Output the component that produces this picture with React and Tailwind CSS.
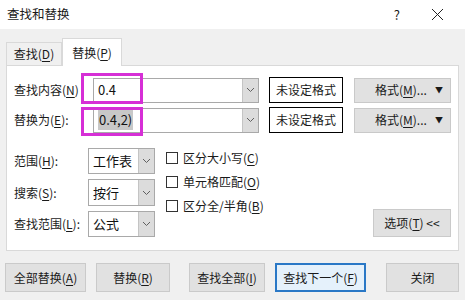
import React from "react";

const font = { fontFamily: '"Noto Sans CJK SC", "Noto Sans", sans-serif' };

function Key({ children }) {
  return <span className="underline underline-offset-2">{children}</span>;
}

function Chevron() {
  return (
    <svg width="9" height="6" viewBox="0 0 9 6" className="text-[#606060]">
      <polyline points="1,1 4.5,4.5 8,1" fill="none" stroke="currentColor" strokeWidth="1" />
    </svg>
  );
}

function Combo({ width, children }) {
  return (
    <div className={`flex h-[25px] border border-[#a9a9a9] bg-white ${width}`}>
      <div className="flex-1 flex items-center pl-[4px] text-[13px] text-[#111] whitespace-nowrap">{children}</div>
      <div className="w-[16px] bg-[#dcdcdc] border-l border-[#c4c4c4] flex items-center justify-center">
        <Chevron />
      </div>
    </div>
  );
}

function FormatButtons() {
  return (
    <div className="flex items-center">
      <div className="ml-[10px] w-[74px] h-[26px] border border-black flex items-center justify-center text-[12px] whitespace-nowrap">
        未设定格式
      </div>
      <div className="ml-[11px] w-[97px] h-[25px] bg-[#e1e1e1] border border-[#c9c9c9] flex items-center pl-[20px] text-[12px] whitespace-nowrap">
        <span>
          格式(<Key>M</Key>)...
        </span>
        <span className="ml-[8px] text-[8px]">▼</span>
      </div>
    </div>
  );
}

function Check({ children }) {
  return (
    <div className="flex items-center h-[24px] whitespace-nowrap">
      <div className="w-[12px] h-[12px] border border-[#333] bg-white" />
      <span className="ml-[5px] text-[12px]">{children}</span>
    </div>
  );
}

function Btn({ w, ml, blue, children }) {
  return (
    <div
      className={`h-[29px] flex items-center justify-center text-[12px] whitespace-nowrap ${w} ${ml} ${
        blue ? "bg-[#e5f1fb] border-2 border-[#2a78c6]" : "bg-[#e1e1e1] border border-[#cacaca]"
      }`}
    >
      {children}
    </div>
  );
}

export default function App() {
  return (
    <div className="w-[465px] h-[300px] bg-[#f0f0f0] text-[#1a1a1a] overflow-hidden" style={font}>
      {/* title bar */}
      <div className="h-[29px] bg-white flex items-center">
        <span className="ml-[7px] text-[12.5px]">查找和替换</span>
        <span className="ml-auto text-[13px] mr-[31px]">?</span>
        <svg width="13" height="13" viewBox="0 0 13 13" className="mr-[21px]">
          <path d="M1 1L12 12M12 1L1 12" stroke="#222" strokeWidth="1" />
        </svg>
      </div>

      {/* tabs */}
      <div className="h-[36px] flex items-end pl-[6px]">
        <div className="w-[56px] h-[23px] border border-b-0 border-[#d9d9d9] flex items-center justify-center text-[12px]">
          查找(<Key>D</Key>)
        </div>
        <div className="w-[60px] h-[28px] -mb-px bg-white border border-b-0 border-[#d9d9d9] flex items-center justify-center text-[12px] relative z-10">
          替换(<Key>P</Key>)
        </div>
      </div>

      {/* panel */}
      <div className="relative ml-[6px] w-[453px] h-[186px] bg-white border border-[#d9d9d9] pl-[7px] pt-[11px]">
        {/* row 1 */}
        <div className="flex items-center h-[26px]">
          <div className="w-[79px] text-[12px] whitespace-nowrap">
            查找内容(<Key>N</Key>)
          </div>
          <Combo width="w-[166px]">0.4</Combo>
          <FormatButtons />
        </div>
        {/* row 2 */}
        <div className="flex items-center h-[26px] mt-[4px]">
          <div className="w-[79px] text-[12px] whitespace-nowrap">
            替换为(<Key>E</Key>):
          </div>
          <Combo width="w-[166px]">
            <span className="bg-[#c8c8c8] px-px">0.4,2)</span>
          </Combo>
          <FormatButtons />
        </div>

        <div className="flex mt-[15px]">
          {/* selects */}
          <div className="flex flex-col gap-[5px]">
            <div className="flex items-center h-[26px]">
              <div className="w-[74px] text-[12px] whitespace-nowrap">
                范围(<Key>H</Key>):
              </div>
              <Combo width="w-[67px] h-[26px]">工作表</Combo>
            </div>
            <div className="flex items-center h-[27px]">
              <div className="w-[74px] text-[12px] whitespace-nowrap">
                搜索(<Key>S</Key>):
              </div>
              <Combo width="w-[67px] h-[27px]">按行</Combo>
            </div>
            <div className="flex items-center h-[26px]">
              <div className="w-[74px] text-[12px] whitespace-nowrap">
                查找范围(<Key>L</Key>):
              </div>
              <Combo width="w-[67px] h-[26px]">公式</Combo>
            </div>
          </div>

          {/* checkboxes */}
          <div className="ml-[11px] flex flex-col -mt-[2px]">
            <Check>
              区分大小写(<Key>C</Key>)
            </Check>
            <Check>
              单元格匹配(<Key>O</Key>)
            </Check>
            <Check>
              区分全/半角(<Key>B</Key>)
            </Check>
          </div>

          <div className="ml-auto mr-[7px] self-end w-[78px] h-[28px] bg-[#e1e1e1] border border-[#cacaca] flex items-center justify-center text-[12px] whitespace-nowrap">
            选项(<Key>T</Key>)&nbsp;&lt;&lt;
          </div>
        </div>

        {/* highlight boxes */}
        <div className="absolute left-[74px] top-[7px] w-[62px] h-[31px] border-[3px] border-[#d62fd6]" />
        <div className="absolute left-[74px] top-[41px] w-[62px] h-[29px] border-[3px] border-[#d62fd6]" />
      </div>

      {/* bottom buttons */}
      <div className="flex mt-[12px] pl-[5px]">
        <Btn w="w-[81px]">
          全部替换(<Key>A</Key>)
        </Btn>
        <Btn w="w-[74px]" ml="ml-[10px]">
          替换(<Key>R</Key>)
        </Btn>
        <Btn w="w-[76px]" ml="ml-[19px]">
          查找全部(<Key>I</Key>)
        </Btn>
        <Btn w="w-[91px]" ml="ml-[10px]" blue>
          查找下一个(<Key>F</Key>)
        </Btn>
        <Btn w="w-[73px]" ml="ml-[20px]">
          关闭
        </Btn>
      </div>
    </div>
  );
}
